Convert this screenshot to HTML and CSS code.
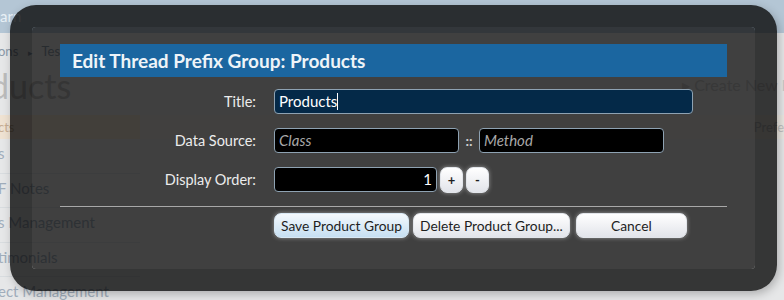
FILE: index.html
```html
<!DOCTYPE html>
<html lang="en">
<head>
  <meta charset="UTF-8" />
  <meta name="viewport" content="width=device-width, initial-scale=1"/>
  <title>Edit Thread Prefix Group – Admin</title>
  <link rel="stylesheet" href="styles.css">
</head>
<body>

  <!-- Admin page behind the overlay -->
  <div class="page">
    <div class="topbar"><span class="brand">arn</span></div>
    <div class="crumbs">ons <span class="arrow">&#9656;</span> Test</div>
    <div class="page-head">
      <h1>ducts</h1>
      <span class="create">&#9656; Create New Prefix</span>
    </div>
    <div class="layout">
      <ul class="side">
        <li class="active">cts</li>
        <li>s</li>
        <li>F Notes</li>
        <li>s Management</li>
        <li>timonials</li>
        <li>ect Management</li>
      </ul>
      <div class="main">
        <div class="list-head">Prefe</div>
      </div>
    </div>
  </div>

  <!-- Overlay -->
  <div class="overlay">
    <div class="panel">
      <h2 class="heading">Edit Thread Prefix Group: Products</h2>

      <div class="form">
        <div class="row">
          <span class="lbl">Title:</span>
          <div class="field field-title focus">Products<span class="caret"></span></div>
        </div>
        <div class="row">
          <span class="lbl">Data Source:</span>
          <div class="field field-half placeholder">Class</div>
          <span class="sep">::</span>
          <div class="field field-half placeholder">Method</div>
        </div>
        <div class="row">
          <span class="lbl">Display Order:</span>
          <div class="field field-num">1</div>
          <button class="btn spin">+</button>
          <button class="btn spin">-</button>
        </div>
      </div>

      <hr class="rule">

      <div class="buttons">
        <button class="btn primary">Save Product Group</button>
        <button class="btn">Delete Product Group...</button>
        <button class="btn cancel">Cancel</button>
      </div>
    </div>
  </div>

</body>
</html>
```

FILE: styles.css
```css
/* Base */
body {
  margin: 0;
  padding: 0;
  background: #e6e7e8;
  font-family: Lato, 'Liberation Sans', sans-serif;
  width: 784px;
  height: 300px;
  overflow: hidden;
  position: relative;
}

/* Page behind */
.page {
  color: #9aa6b2;
}

.topbar {
  height: 33px;
  background: #b4c6d5;
  font-size: 15px;
  line-height: 33px;
  color: #e8f0f6;
}

.crumbs {
  height: 36px;
  line-height: 36px;
  font-size: 13px;
  color: #8b99a8;
  margin-left: -2px;
}

.crumbs .arrow {
  font-size: 9px;
  padding: 0 6px;
}

.page-head {
  display: flex;
  justify-content: space-between;
  align-items: center;
  height: 32px;
}

.page-head h1 {
  margin: 0 0 0 -10px;
  font-weight: normal;
  font-size: 34px;
  color: #bcbcbc;
}

.create {
  font-size: 16px;
  color: #c8c8c8;
  white-space: nowrap;
  margin-right: -38px;
}

.layout {
  display: flex;
  margin-top: 14px;
}

.side {
  list-style: none;
  margin: 0;
  padding: 0;
  width: 140px;
}

.side li {
  height: 33.5px;
  line-height: 28px;
  font-size: 15px;
  color: #a0adbb;
  border-bottom: 1px solid #d8dcdf;
  white-space: nowrap;
  margin-left: -2px;
}

.side li.active {
  height: 24px;
  line-height: 24px;
  background: #efe2d2;
  color: #c7ad92;
  font-size: 13px;
  border: none;
}

.main {
  flex: 1;
}

.list-head {
  height: 24px;
  line-height: 24px;
  background: #ebe8e2;
  text-align: right;
  font-size: 13px;
  color: #c0c0c0;
}

/* Overlay */
.overlay {
  position: absolute;
  left: 10px;
  top: 5px;
  width: 723px;
  height: 242px;
  border: 22px solid rgba(0, 0, 0, 0.77);
  border-radius: 26px;
  background: rgba(6, 6, 6, 0.74);
  background-clip: padding-box;
  box-shadow: 2px 3px 10px rgba(0, 0, 0, 0.25);
}

.panel {
  padding: 17px 28px 0;
}

.heading {
  margin: 0;
  height: 33px;
  line-height: 33px;
  padding-left: 12px;
  background: #1b66a0;
  color: #eef4f8;
  font-size: 19px;
  font-weight: bold;
}

/* Form rows */
.form {
  display: flex;
  flex-direction: column;
  gap: 14px;
  margin-top: 12px;
}

.row {
  display: flex;
  align-items: center;
  height: 25px;
}

.lbl {
  width: 196px;
  text-align: right;
  margin-right: 18px;
  color: #ececec;
  font-size: 14.5px;
}

.field {
  box-sizing: border-box;
  height: 25px;
  line-height: 23px;
  padding: 0 4px;
  border: 1px solid #8ea2b2;
  border-radius: 4px;
  background: #000;
  color: #fff;
  font-size: 15px;
}

.field.focus {
  background: #042948;
}

.caret {
  display: inline-block;
  width: 1px;
  height: 17px;
  background: #fff;
  vertical-align: -3px;
}

.field-title {
  width: 419px;
}

.field-half {
  width: 185px;
}

.field-num {
  width: 163px;
  text-align: right;
}

.placeholder {
  color: #a8a8a8;
  font-style: italic;
}

.sep {
  width: 20px;
  text-align: center;
  color: #d0d0d0;
  font-weight: bold;
  font-size: 14px;
}

/* Buttons */
.btn {
  font-family: inherit;
  font-size: 13.8px;
  color: #1e1e1e;
  height: 25px;
  padding: 0 6px;
  border: 1px solid #e2e5ea;
  border-radius: 7px;
  background: linear-gradient(#ffffff, #e2e4ea);
  box-shadow: 0 0 4px rgba(255, 255, 255, 0.45);
  cursor: pointer;
}

.btn.primary {
  background: linear-gradient(#f4f9fd, #c6dff2);
  border-color: #d9e9f5;
}

.btn.spin {
  width: 23px;
  height: 26px;
  padding: 0;
  font-size: 13px;
  font-weight: bold;
  margin-left: 3px;
}

.btn.cancel {
  width: 111px;
}

.rule {
  margin: 14px 0 0;
  border: none;
  border-top: 1px solid #a8a8a8;
}

.buttons {
  display: flex;
  gap: 4px;
  margin: 6px 0 0 214px;
}

.buttons .cancel {
  margin-left: 2px;
}
```
